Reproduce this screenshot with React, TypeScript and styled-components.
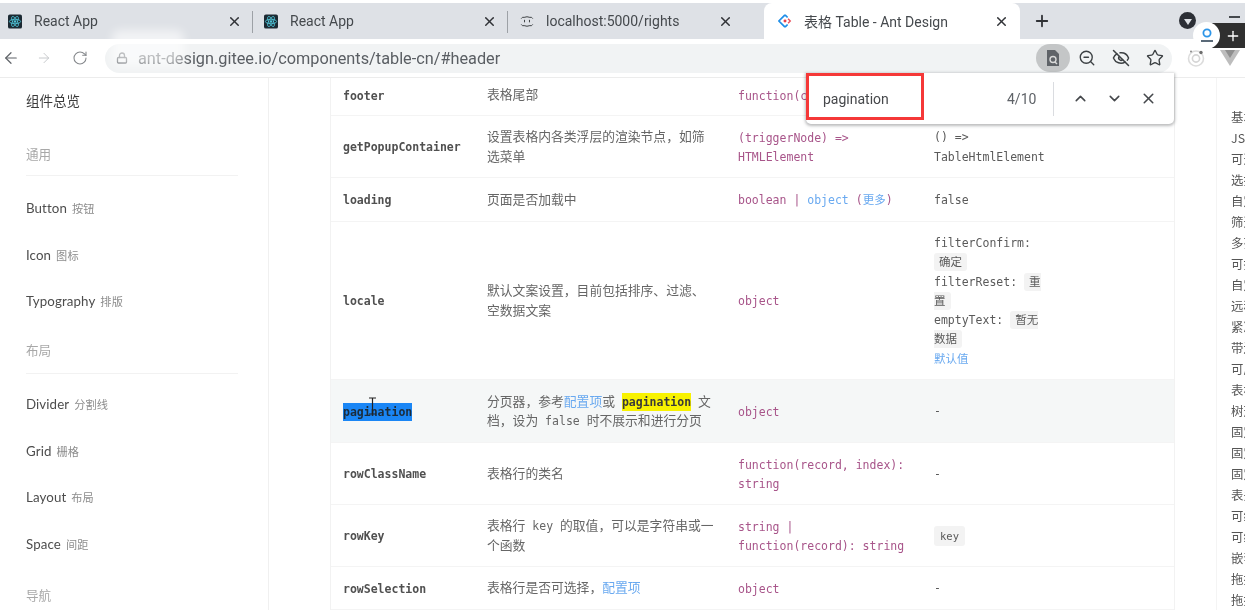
import React from 'react';
import { createGlobalStyle, styled } from 'styled-components';
import { ArrowLeft, ArrowRight, ChevronDown, ChevronUp, EyeOff, Lock, Plus, RotateCw, Star, X, ZoomOut } from 'lucide-react';

const GlobalStyle = createGlobalStyle`
  html, body {
    margin: 0;
    padding: 0;
    background: #fff;
    overflow: hidden;
  }
  #root {
    width: 1245px;
    height: 610px;
    filter: blur(0.35px);
  }
`;

const CJK = `"Noto Sans CJK SC", sans-serif`;
const MONO = `"DejaVu Sans Mono", "Noto Sans CJK SC", monospace`;

const Styled = {
  Window: styled.div`
    position: relative;
    width: 1245px;
    height: 610px;
    overflow: hidden;
    padding-top: 3px;
    box-sizing: border-box;
    display: flex;
    flex-direction: column;
    background: #fff;
    font-family: Roboto, ${CJK};
  `,

  TabStrip: styled.div`
    height: 36px;
    flex: none;
    display: flex;
    align-items: stretch;
    background: #dee1e6;
  `,
  Tab: styled.div<{ $width: number; $pad?: number; $active?: boolean; $sep?: boolean }>`
    position: relative;
    width: ${({ $width }) => $width}px;
    flex: none;
    box-sizing: border-box;
    display: flex;
    align-items: center;
    padding: 0 11px 0 ${({ $pad }) => $pad ?? 8}px;
    font-size: 14px;
    color: #45494d;
    background: ${({ $active }) => ($active ? '#fff' : 'transparent')};
    border-radius: ${({ $active }) => ($active ? '8px 8px 0 0' : '0')};

    &::after {
      content: '';
      display: ${({ $sep }) => ($sep ? 'block' : 'none')};
      position: absolute;
      right: 0;
      top: 8px;
      bottom: 6px;
      width: 1px;
      background: #9da1a6;
    }
  `,
  TabIcon: styled.span`
    width: 14px;
    height: 14px;
    flex: none;
    display: flex;
    align-items: center;
    justify-content: center;
  `,
  TabTitle: styled.span`
    flex: 1;
    margin-left: 12px;
    white-space: nowrap;
    overflow: hidden;
  `,
  TabClose: styled(X)<{ $right?: number }>`
    flex: none;
    color: #303236;
    margin-right: ${({ $right }) => $right ?? 0}px;
  `,
  NewTab: styled(Plus)`
    margin: 9px 0 0 13px;
    color: #303236;
  `,
  TabMenu: styled.span`
    margin: 9px 0 0 128px;
    width: 17px;
    height: 17px;
    border-radius: 50%;
    background: #2c2f36;
    display: flex;
    align-items: center;
    justify-content: center;

    &::before {
      content: '';
      border-left: 4.5px solid transparent;
      border-right: 4.5px solid transparent;
      border-top: 6px solid #dee1e6;
      margin-top: 2px;
    }
  `,
  Minimize: styled.span`
    margin: 13px 0 0 33px;
    width: 11px;
    height: 1.5px;
    background: #45494d;
  `,

  Toolbar: styled.div`
    height: 39px;
    flex: none;
    box-sizing: border-box;
    display: flex;
    align-items: center;
    background: #fff;
    border-bottom: 1px solid #ececec;
  `,
  NavButton: styled.span<{ $width: number; $color: string }>`
    width: ${({ $width }) => $width}px;
    flex: none;
    display: flex;
    justify-content: center;
    color: ${({ $color }) => $color};
  `,
  Omnibox: styled.div`
    margin-left: 11px;
    width: 1067px;
    height: 29px;
    flex: none;
    border-radius: 15px;
    background: #f1f3f4;
    display: flex;
    align-items: center;
    padding-left: 11px;
    box-sizing: border-box;
  `,
  Url: styled.span`
    margin-left: 10px;
    flex: 1;
    font-size: 16.3px;
    color: #5a5e63;
    white-space: nowrap;
  `,
  OmniAction: styled.span<{ $on?: boolean }>`
    width: 34px;
    height: 28px;
    flex: none;
    display: flex;
    align-items: center;
    justify-content: center;
    border-radius: 14px;
    color: #3c4043;
    background: ${({ $on }) => ($on ? '#c4c6c7' : 'transparent')};
  `,
  ExtSlot: styled.span<{ $width: number; $left?: number }>`
    width: ${({ $width }) => $width}px;
    margin-left: ${({ $left }) => $left ?? 0}px;
    flex: none;
    display: flex;
    justify-content: center;
  `,

  Watermark: styled.div`
    position: absolute;
    left: 112px;
    top: 30px;
    width: 72px;
    height: 36px;
    background: rgba(255, 255, 255, 0.6);
    border-radius: 8px;
    filter: blur(5px);
  `,

  FindBar: styled.div`
    position: absolute;
    left: 806px;
    top: 73px;
    width: 368px;
    height: 51px;
    box-sizing: border-box;
    display: flex;
    align-items: center;
    padding-left: 17px;
    background: #fff;
    border-radius: 0 0 5px 5px;
    box-shadow: 0 1px 3px 1px rgba(60, 64, 67, 0.35);
    font-size: 14px;
    color: #46484b;
  `,
  FindInput: styled.span`
    width: 184px;
    flex: none;
  `,
  FindCount: styled.span`
    width: 46px;
    flex: none;
    color: #5f6368;
  `,
  FindDivider: styled.span`
    width: 1px;
    height: 34px;
    flex: none;
    background: #dadce0;
    margin-right: 9px;
  `,
  FindAction: styled.span`
    width: 34px;
    flex: none;
    display: flex;
    justify-content: center;
    color: #45484c;
  `,
  RedBox: styled.div`
    position: absolute;
    left: 0;
    top: 0;
    width: 118px;
    height: 47px;
    box-sizing: border-box;
    border: 3px solid #f53838;
  `,

  RecordWidget: styled.div`
    position: absolute;
    left: 1207px;
    top: 23px;
    width: 38px;
    height: 25px;
    background: #2f2f2f;
    color: #fff;
    display: flex;
    align-items: center;
    justify-content: flex-end;
    padding-right: 4px;
    box-sizing: border-box;
  `,
  RecordBadge: styled.div`
    position: absolute;
    left: -14px;
    top: -1px;
    width: 27px;
    height: 27px;
    border-radius: 50%;
    background: #fff;
    display: flex;
    align-items: center;
    justify-content: center;
  `,

  Page: styled.div`
    flex: 1;
    min-height: 0;
    display: flex;
    overflow: hidden;
  `,

  Sidebar: styled.nav`
    width: 269px;
    flex: none;
    box-sizing: border-box;
    padding: 0 30px 0 26px;
    border-right: 1px solid #f0f0f0;
    color: #3b3b3b;
  `,
  Overview: styled.div`
    height: 46px;
    box-sizing: border-box;
    padding-bottom: 3px;
    display: flex;
    align-items: center;
    font-family: ${CJK};
    font-size: 13.5px;
  `,
  GroupTitle: styled.div<{ $top: number; $bottom: number; $height: number }>`
    height: ${({ $height }) => $height}px;
    margin: ${({ $top, $bottom }) => `${$top}px 0 ${$bottom}px`};
    padding-bottom: 4px;
    display: flex;
    align-items: center;
    box-sizing: border-box;
    border-bottom: 1px solid #f2f2f2;
    font-family: ${CJK};
    font-size: 12.6px;
    color: #a8a8a8;
  `,
  MenuItem: styled.div`
    height: 46.4px;
    display: flex;
    align-items: center;
    gap: 5px;
    font-family: Lato, Roboto, sans-serif;
    font-size: 13.3px;
    letter-spacing: 0.1px;
    color: #4d4d4d;
  `,
  MenuSub: styled.span`
    font-family: ${CJK};
    font-size: 11.2px;
    color: #8c8c8c;
  `,

  Main: styled.main`
    width: 907px;
    flex: none;
    padding-left: 61px;
    box-sizing: border-box;
  `,
  Table: styled.div`
    width: 845px;
    box-sizing: border-box;
    margin-top: -3px;
    border-left: 1px solid #f2f2f2;
    border-right: 1px solid #f2f2f2;
  `,
  Row: styled.div<{ $height: number; $hover?: boolean }>`
    height: ${({ $height }) => $height}px;
    box-sizing: border-box;
    display: grid;
    grid-template-columns: 144px 251px 196px 136px 1fr;
    align-items: center;
    border-bottom: 1px solid #f4f4f4;
    background: ${({ $hover }) => ($hover ? '#f5f7f7' : 'transparent')};
  `,
  Name: styled.div`
    padding: 2px 12px 0;
    font-family: ${MONO};
    font-size: 11.5px;
    font-weight: 700;
    line-height: 19px;
    color: #505050;
  `,
  Desc: styled.div`
    padding: 0 12px 2px;
    font-family: ${CJK};
    font-size: 12.8px;
    line-height: 19.5px;
    color: #666;
  `,
  Type: styled.div`
    padding: 2px 12px 0;
    font-family: ${MONO};
    font-size: 11.5px;
    line-height: 19px;
    color: #a8558a;
  `,
  Default: styled.div`
    padding: 2px 12px 0;
    font-family: ${MONO};
    font-size: 11.5px;
    line-height: 19.2px;
    color: #5a5a5a;
  `,
  InlineCode: styled.span`
    font-family: ${MONO};
    font-size: 11.5px;
    line-height: 1;
    white-space: pre-wrap;
  `,
  Code: styled.code<{ $small?: boolean }>`
    font-family: ${MONO};
    font-size: ${({ $small }) => ($small ? '10.5px' : '11.5px')};
    background: #f3f3f3;
    padding: ${({ $small }) => ($small ? '4px 6px' : '2px 5px')};
    border-radius: 3px;
  `,
  Link: styled.span`
    color: #69a9f0;
  `,
  Selected: styled.span`
    position: relative;
    background: #1a86f5;
    color: #1c2c3a;
    padding: 2px 0;
  `,
  Caret: styled.svg`
    position: absolute;
    left: 25px;
    top: -6px;
  `,
  Mark: styled.mark`
    background: #f8f200;
    color: #3a3a3a;
    padding: 2px 0;
    font-family: ${MONO};
    font-size: 11.5px;
    font-weight: 700;
    line-height: 1;
  `,

  Anchor: styled.aside`
    margin-left: 40px;
    padding: 29px 0 0 14px;
    width: 200px;
    flex: none;
    box-sizing: border-box;
    border-left: 1px solid #f4f4f4;
    font-family: ${CJK};
    font-size: 12.4px;
    line-height: 21px;
    color: #555;
    white-space: nowrap;
  `,
};

function ReactIcon() {
  return (
    <svg width="15" height="15" viewBox="0 0 15 15">
      <rect width="15" height="15" rx="2" fill="#1c2a33" />
      <g fill="none" stroke="#4fc3d6" strokeWidth="0.9">
        <ellipse cx="7.5" cy="7.5" rx="6" ry="2.4" />
        <ellipse cx="7.5" cy="7.5" rx="6" ry="2.4" transform="rotate(60 7.5 7.5)" />
        <ellipse cx="7.5" cy="7.5" rx="6" ry="2.4" transform="rotate(120 7.5 7.5)" />
      </g>
      <circle cx="7.5" cy="7.5" r="1.3" fill="#4fc3d6" />
    </svg>
  );
}

function LocalIcon() {
  return (
    <svg width="17" height="15" viewBox="0 0 17 15" fill="none" stroke="#3c4043" strokeWidth="1.2">
      <path d="M1.5 4 Q3 1.5 5 2.5 Q8.5 1 12 2.5 Q14 1.5 15.5 4" />
      <path d="M1.5 11 Q3 13.5 5 12.5 Q8.5 14 12 12.5 Q14 13.5 15.5 11" />
      <path d="M5.5 5.5v3M11.5 5.5v3" />
    </svg>
  );
}

function AntIcon() {
  return (
    <svg width="16" height="16" viewBox="0 0 16 16" fill="none">
      <path d="M8 1 L1 8 L8 15" stroke="#1f8ee8" strokeWidth="2" />
      <path d="M8 1 L11 4 M8 15 L11 12" stroke="#1f8ee8" strokeWidth="2" />
      <path d="M11.5 5.5 L14 8 L11.5 10.5" stroke="#e8505b" strokeWidth="1.6" />
      <circle cx="8" cy="8" r="1.7" fill="#e8404a" />
    </svg>
  );
}

function DocSearchIcon() {
  return (
    <svg width="16" height="18" viewBox="0 0 16 18">
      <path d="M2 1h8l4 4v12H2z" fill="#5f6368" />
      <circle cx="8" cy="10.5" r="3" fill="none" stroke="#d9d9d9" strokeWidth="1.4" />
      <path d="M10 13l2 2" stroke="#d9d9d9" strokeWidth="1.4" />
    </svg>
  );
}

function RingIcon() {
  return (
    <svg width="18" height="18" viewBox="0 0 18 18" fill="none">
      <circle cx="9" cy="9.5" r="7.5" stroke="#dcdcdc" strokeWidth="1.6" />
      <circle cx="9" cy="9.5" r="3.6" stroke="#d4d4d4" strokeWidth="1.6" />
      <circle cx="14" cy="3.5" r="1.7" fill="#6e6e6e" />
      <circle cx="4" cy="2.5" r="1" fill="#8a8a8a" />
    </svg>
  );
}

function VueIcon() {
  return (
    <svg width="20" height="16" viewBox="0 0 20 16">
      <path d="M0 0h20L10 16z" fill="#bdbdbd" />
      <path d="M5 0h10l-5 8z" fill="#8f8f8f" />
    </svg>
  );
}

function RecordLogo() {
  return (
    <svg width="18" height="18" viewBox="0 0 18 18">
      <circle cx="9" cy="6" r="3.6" fill="none" stroke="#2c95e8" strokeWidth="1.8" />
      <path d="M3 14h12" stroke="#5a6a78" strokeWidth="2" />
    </svg>
  );
}

const anchors = [
  '基本用法', 'JSX 风格的 API', '可选择', '选择和操作', '自定义选择项', '筛选和排序',
  '多列排序', '可控的筛选和排序', '自定义筛选菜单', '远程加载数据', '紧凑型', '带边框',
  '可展开', '表格行/列合并', '树形数据展示', '固定表头', '固定列', '固定头和列',
  '表头分组', '可编辑单元格', '可编辑行', '嵌套子表格', '拖拽排序', '拖拽手柄列',
];

function App() {
  return (
    <Styled.Window>
      <GlobalStyle />
      <Styled.TabStrip>
        <Styled.Tab $width={253} $sep>
          <Styled.TabIcon><ReactIcon /></Styled.TabIcon>
          <Styled.TabTitle>React App</Styled.TabTitle>
          <Styled.TabClose size={15} strokeWidth={2.4} />
        </Styled.Tab>
        <Styled.Tab $width={255} $pad={11} $sep>
          <Styled.TabIcon><ReactIcon /></Styled.TabIcon>
          <Styled.TabTitle>React App</Styled.TabTitle>
          <Styled.TabClose size={15} strokeWidth={2.4} />
        </Styled.Tab>
        <Styled.Tab $width={256} $pad={12}>
          <Styled.TabIcon><LocalIcon /></Styled.TabIcon>
          <Styled.TabTitle>localhost:5000/rights</Styled.TabTitle>
          <Styled.TabClose size={15} strokeWidth={2.4} $right={20} />
        </Styled.Tab>
        <Styled.Tab $width={256} $pad={14} $active>
          <Styled.TabIcon><AntIcon /></Styled.TabIcon>
          <Styled.TabTitle>表格 Table - Ant Design</Styled.TabTitle>
          <Styled.TabClose size={15} strokeWidth={2.4} />
        </Styled.Tab>
        <Styled.NewTab size={18} strokeWidth={2.4} />
        <Styled.TabMenu />
        <Styled.Minimize />
      </Styled.TabStrip>

      <Styled.Toolbar>
        <Styled.NavButton $width={22} $color="#5f6368"><ArrowLeft size={18} strokeWidth={1.6} /></Styled.NavButton>
        <Styled.NavButton $width={44} $color="#c4c6c9"><ArrowRight size={16} strokeWidth={1.4} /></Styled.NavButton>
        <Styled.NavButton $width={28} $color="#85888c"><RotateCw size={16} strokeWidth={1.6} /></Styled.NavButton>
        <Styled.Omnibox>
          <Lock size={12} strokeWidth={2.6} color="#5f6368" />
          <Styled.Url>ant-design.gitee.io/components/table-cn/#header</Styled.Url>
          <Styled.OmniAction $on><DocSearchIcon /></Styled.OmniAction>
          <Styled.OmniAction><ZoomOut size={18} strokeWidth={1.8} /></Styled.OmniAction>
          <Styled.OmniAction><EyeOff size={18} strokeWidth={2} /></Styled.OmniAction>
          <Styled.OmniAction><Star size={18} strokeWidth={1.8} /></Styled.OmniAction>
        </Styled.Omnibox>
        <Styled.ExtSlot $width={36} $left={6}><RingIcon /></Styled.ExtSlot>
        <Styled.ExtSlot $width={32}><VueIcon /></Styled.ExtSlot>
      </Styled.Toolbar>

      <Styled.Page>
        <Styled.Sidebar>
          <Styled.Overview>组件总览</Styled.Overview>
          <Styled.GroupTitle $top={11} $bottom={9} $height={41}>通用</Styled.GroupTitle>
          <Styled.MenuItem>Button<Styled.MenuSub>按钮</Styled.MenuSub></Styled.MenuItem>
          <Styled.MenuItem>Icon<Styled.MenuSub>图标</Styled.MenuSub></Styled.MenuItem>
          <Styled.MenuItem>Typography<Styled.MenuSub>排版</Styled.MenuSub></Styled.MenuItem>
          <Styled.GroupTitle $top={5} $bottom={7} $height={45}>布局</Styled.GroupTitle>
          <Styled.MenuItem>Divider<Styled.MenuSub>分割线</Styled.MenuSub></Styled.MenuItem>
          <Styled.MenuItem>Grid<Styled.MenuSub>栅格</Styled.MenuSub></Styled.MenuItem>
          <Styled.MenuItem>Layout<Styled.MenuSub>布局</Styled.MenuSub></Styled.MenuItem>
          <Styled.MenuItem>Space<Styled.MenuSub>间距</Styled.MenuSub></Styled.MenuItem>
          <Styled.GroupTitle $top={10} $bottom={0} $height={40}>导航</Styled.GroupTitle>
        </Styled.Sidebar>

        <Styled.Main>
          <Styled.Table>
            <Styled.Row $height={41}>
              <Styled.Name>footer</Styled.Name>
              <Styled.Desc>表格尾部</Styled.Desc>
              <Styled.Type>function(currentPageData)</Styled.Type>
            </Styled.Row>
            <Styled.Row $height={62}>
              <Styled.Name>getPopupContainer</Styled.Name>
              <Styled.Desc>设置表格内各类浮层的渲染节点，如筛选菜单</Styled.Desc>
              <Styled.Type>(triggerNode) =&gt; HTMLElement</Styled.Type>
              <Styled.Default>() =&gt; TableHtmlElement</Styled.Default>
            </Styled.Row>
            <Styled.Row $height={44}>
              <Styled.Name>loading</Styled.Name>
              <Styled.Desc>页面是否加载中</Styled.Desc>
              <Styled.Type>boolean | <Styled.Link>object</Styled.Link> (<Styled.Link>更多</Styled.Link>)</Styled.Type>
              <Styled.Default>false</Styled.Default>
            </Styled.Row>
            <Styled.Row $height={158}>
              <Styled.Name>locale</Styled.Name>
              <Styled.Desc>默认文案设置，目前包括排序、过滤、空数据文案</Styled.Desc>
              <Styled.Type>object</Styled.Type>
              <Styled.Default>
                filterConfirm: <Styled.Code>确定</Styled.Code><br />
                filterReset: <Styled.Code>重置</Styled.Code><br />
                emptyText: <Styled.Code>暂无数据</Styled.Code><br />
                <Styled.Link>默认值</Styled.Link>
              </Styled.Default>
            </Styled.Row>
            <Styled.Row $height={63} $hover>
              <Styled.Name>
                <Styled.Selected>
                  pagination
                  <Styled.Caret width="9" height="18" viewBox="0 0 9 18" fill="none" stroke="#222" strokeWidth="1.2">
                    <path d="M1 1h7M1 17h7M4.5 1v16" />
                  </Styled.Caret>
                </Styled.Selected>
              </Styled.Name>
              <Styled.Desc>
                分页器，参考<Styled.Link>配置项</Styled.Link>或<Styled.InlineCode> </Styled.InlineCode><Styled.Mark>pagination</Styled.Mark><Styled.InlineCode> </Styled.InlineCode>文档，设为<Styled.InlineCode> false </Styled.InlineCode>时不展示和进行分页
              </Styled.Desc>
              <Styled.Type>object</Styled.Type>
              <Styled.Default>-</Styled.Default>
            </Styled.Row>
            <Styled.Row $height={62}>
              <Styled.Name>rowClassName</Styled.Name>
              <Styled.Desc>表格行的类名</Styled.Desc>
              <Styled.Type>function(record, index): string</Styled.Type>
              <Styled.Default>-</Styled.Default>
            </Styled.Row>
            <Styled.Row $height={62}>
              <Styled.Name>rowKey</Styled.Name>
              <Styled.Desc>表格行<Styled.InlineCode> key </Styled.InlineCode>的取值，可以是字符串或一个函数</Styled.Desc>
              <Styled.Type>string | function(record): string</Styled.Type>
              <Styled.Default><Styled.Code $small>key</Styled.Code></Styled.Default>
            </Styled.Row>
            <Styled.Row $height={43}>
              <Styled.Name>rowSelection</Styled.Name>
              <Styled.Desc>表格行是否可选择，<Styled.Link>配置项</Styled.Link></Styled.Desc>
              <Styled.Type>object</Styled.Type>
              <Styled.Default>-</Styled.Default>
            </Styled.Row>
          </Styled.Table>
        </Styled.Main>

        <Styled.Anchor>
          {anchors.map((label) => (
            <div key={label}>{label}</div>
          ))}
        </Styled.Anchor>
      </Styled.Page>

      <Styled.Watermark />

      <Styled.FindBar>
        <Styled.FindInput>pagination</Styled.FindInput>
        <Styled.FindCount>4/10</Styled.FindCount>
        <Styled.FindDivider />
        <Styled.FindAction><ChevronUp size={17} strokeWidth={2.2} /></Styled.FindAction>
        <Styled.FindAction><ChevronDown size={17} strokeWidth={2.2} /></Styled.FindAction>
        <Styled.FindAction><X size={17} strokeWidth={2.2} /></Styled.FindAction>
        <Styled.RedBox />
      </Styled.FindBar>

      <Styled.RecordWidget>
        <Styled.RecordBadge><RecordLogo /></Styled.RecordBadge>
        <Plus size={16} strokeWidth={2} />
      </Styled.RecordWidget>
    </Styled.Window>
  );
}

export default App;
